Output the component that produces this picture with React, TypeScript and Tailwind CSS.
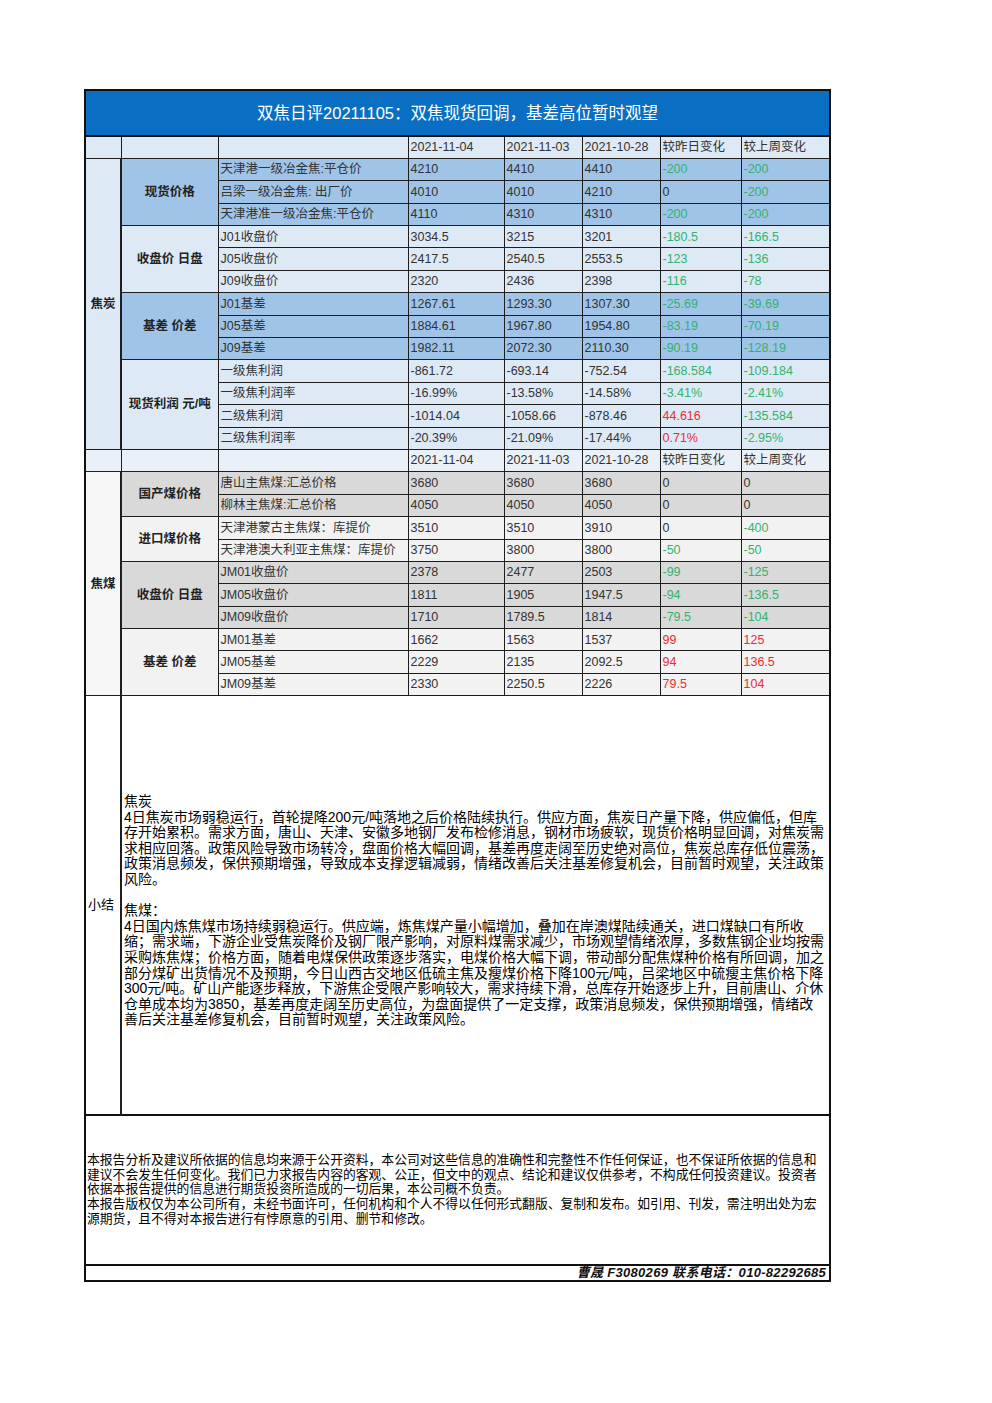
import React from "react";

// ─── Data ───────────────────────────────────────────────────────────────────────

type Tone = "g" | "r" | "n";
type Row = [string, string, string, string, [string, Tone], [string, Tone]];

interface Group {
  label: string;
  bg: string;
  rows: Row[];
}

const cokeGroups: Group[] = [
  {
    label: "现货价格",
    bg: "bg-[#9fc4e8]",
    rows: [
      ["天津港一级冶金焦:平仓价", "4210", "4410", "4410", ["-200", "g"], ["-200", "g"]],
      ["吕梁一级冶金焦: 出厂价", "4010", "4010", "4210", ["0", "n"], ["-200", "g"]],
      ["天津港准一级冶金焦:平仓价", "4110", "4310", "4310", ["-200", "g"], ["-200", "g"]],
    ],
  },
  {
    label: "收盘价 日盘",
    bg: "bg-[#dde9f5]",
    rows: [
      ["J01收盘价", "3034.5", "3215", "3201", ["-180.5", "g"], ["-166.5", "g"]],
      ["J05收盘价", "2417.5", "2540.5", "2553.5", ["-123", "g"], ["-136", "g"]],
      ["J09收盘价", "2320", "2436", "2398", ["-116", "g"], ["-78", "g"]],
    ],
  },
  {
    label: "基差 价差",
    bg: "bg-[#9fc4e8]",
    rows: [
      ["J01基差", "1267.61", "1293.30", "1307.30", ["-25.69", "g"], ["-39.69", "g"]],
      ["J05基差", "1884.61", "1967.80", "1954.80", ["-83.19", "g"], ["-70.19", "g"]],
      ["J09基差", "1982.11", "2072.30", "2110.30", ["-90.19", "g"], ["-128.19", "g"]],
    ],
  },
  {
    label: "现货利润 元/吨",
    bg: "bg-[#dde9f5]",
    rows: [
      ["一级焦利润", "-861.72", "-693.14", "-752.54", ["-168.584", "g"], ["-109.184", "g"]],
      ["一级焦利润率", "-16.99%", "-13.58%", "-14.58%", ["-3.41%", "g"], ["-2.41%", "g"]],
      ["二级焦利润", "-1014.04", "-1058.66", "-878.46", ["44.616", "r"], ["-135.584", "g"]],
      ["二级焦利润率", "-20.39%", "-21.09%", "-17.44%", ["0.71%", "r"], ["-2.95%", "g"]],
    ],
  },
];

const coalGroups: Group[] = [
  {
    label: "国产煤价格",
    bg: "bg-[#d9d9d9]",
    rows: [
      ["唐山主焦煤:汇总价格", "3680", "3680", "3680", ["0", "n"], ["0", "n"]],
      ["柳林主焦煤:汇总价格", "4050", "4050", "4050", ["0", "n"], ["0", "n"]],
    ],
  },
  {
    label: "进口煤价格",
    bg: "bg-[#f2f2f2]",
    rows: [
      ["天津港蒙古主焦煤：库提价", "3510", "3510", "3910", ["0", "n"], ["-400", "g"]],
      ["天津港澳大利亚主焦煤：库提价", "3750", "3800", "3800", ["-50", "g"], ["-50", "g"]],
    ],
  },
  {
    label: "收盘价 日盘",
    bg: "bg-[#d9d9d9]",
    rows: [
      ["JM01收盘价", "2378", "2477", "2503", ["-99", "g"], ["-125", "g"]],
      ["JM05收盘价", "1811", "1905", "1947.5", ["-94", "g"], ["-136.5", "g"]],
      ["JM09收盘价", "1710", "1789.5", "1814", ["-79.5", "g"], ["-104", "g"]],
    ],
  },
  {
    label: "基差 价差",
    bg: "bg-[#f2f2f2]",
    rows: [
      ["JM01基差", "1662", "1563", "1537", ["99", "r"], ["125", "r"]],
      ["JM05基差", "2229", "2135", "2092.5", ["94", "r"], ["136.5", "r"]],
      ["JM09基差", "2330", "2250.5", "2226", ["79.5", "r"], ["104", "r"]],
    ],
  },
];

const cokeText = [
  "4日焦炭市场弱稳运行，首轮提降200元/吨落地之后价格陆续执行。供应方面，焦炭日产量下降，供应偏低，但库",
  "存开始累积。需求方面，唐山、天津、安徽多地钢厂发布检修消息，钢材市场疲软，现货价格明显回调，对焦炭需",
  "求相应回落。政策风险导致市场转冷，盘面价格大幅回调，基差再度走阔至历史绝对高位，焦炭总库存低位震荡，",
  "政策消息频发，保供预期增强，导致成本支撑逻辑减弱，情绪改善后关注基差修复机会，目前暂时观望，关注政策",
  "风险。",
];

const coalText = [
  "4日国内炼焦煤市场持续弱稳运行。供应端，炼焦煤产量小幅增加，叠加在岸澳煤陆续通关，进口煤缺口有所收",
  "缩；需求端，下游企业受焦炭降价及钢厂限产影响，对原料煤需求减少，市场观望情绪浓厚，多数焦钢企业均按需",
  "采购炼焦煤；价格方面，随着电煤保供政策逐步落实，电煤价格大幅下调，带动部分配焦煤种价格有所回调，加之",
  "部分煤矿出货情况不及预期，今日山西古交地区低硫主焦及瘦煤价格下降100元/吨，吕梁地区中硫瘦主焦价格下降",
  "300元/吨。矿山产能逐步释放，下游焦企受限产影响较大，需求持续下滑，总库存开始逐步上升，目前唐山、介休",
  "仓单成本均为3850，基差再度走阔至历史高位，为盘面提供了一定支撑，政策消息频发，保供预期增强，情绪改",
  "善后关注基差修复机会，目前暂时观望，关注政策风险。",
];

const disclaimer = [
  "本报告分析及建议所依据的信息均来源于公开资料，本公司对这些信息的准确性和完整性不作任何保证，也不保证所依据的信息和",
  "建议不会发生任何变化。我们已力求报告内容的客观、公正，但文中的观点、结论和建议仅供参考，不构成任何投资建议。投资者",
  "依据本报告提供的信息进行期货投资所造成的一切后果，本公司概不负责。",
  "本报告版权仅为本公司所有，未经书面许可，任何机构和个人不得以任何形式翻版、复制和发布。如引用、刊发，需注明出处为宏",
  "源期货，且不得对本报告进行有悖原意的引用、删节和修改。",
];

const dates = ["2021-11-04", "2021-11-03", "2021-10-28", "较昨日变化", "较上周变化"];

// ─── Cells ──────────────────────────────────────────────────────────────────────

const cell = "border border-[#1e1e1e] h-[22.4px] px-[2px] py-0 text-[12.5px] leading-none whitespace-nowrap";

const toneClass = (t: Tone) =>
  t === "g" ? "text-[#34b26c]" : t === "r" ? "text-[#ee2b33]" : "text-[#333333]";

function HeaderRow({ bg }: { bg: string }) {
  return (
    <tr>
      <td className={`${cell} ${bg}`} />
      <td className={`${cell} ${bg}`} />
      <td className={`${cell} ${bg}`} />
      {dates.map((d) => (
        <td key={d} className={`${cell} ${bg} text-[#333333]`}>
          {d}
        </td>
      ))}
    </tr>
  );
}

function Section({ title, groups, sideBg }: { title: string; groups: Group[]; sideBg: string }) {
  const total = groups.reduce((n, g) => n + g.rows.length, 0);
  return (
    <>
      {groups.map((g, gi) =>
        g.rows.map((r, ri) => (
          <tr key={`${gi}-${ri}`}>
            {gi === 0 && ri === 0 && (
              <td rowSpan={total} className={`${cell} ${sideBg} text-center font-bold text-[#222222] border-r-2`}>
                {title}
              </td>
            )}
            {ri === 0 && (
              <td rowSpan={g.rows.length} className={`${cell} ${g.bg} text-center font-bold text-[#222222]`}>
                {g.label}
              </td>
            )}
            <td className={`${cell} ${g.bg} text-[#333333]`}>{r[0]}</td>
            <td className={`${cell} ${g.bg} text-[#333333]`}>{r[1]}</td>
            <td className={`${cell} ${g.bg} text-[#333333]`}>{r[2]}</td>
            <td className={`${cell} ${g.bg} text-[#333333]`}>{r[3]}</td>
            <td className={`${cell} ${g.bg} ${toneClass(r[4][1])}`}>{r[4][0]}</td>
            <td className={`${cell} ${g.bg} ${toneClass(r[5][1])}`}>{r[5][0]}</td>
          </tr>
        ))
      )}
    </>
  );
}

// ─── Page ───────────────────────────────────────────────────────────────────────

export default function App() {
  return (
    <div
      className="min-h-[1403px] w-[992px] bg-white pl-[84px] pt-[89px]"
      style={{ fontFamily: '"Liberation Sans", "Noto Sans CJK SC", sans-serif' }}
    >
      <table className="w-[745px] table-fixed border-collapse border-2 border-[#111]">
        <colgroup>
          <col className="w-[36px]" />
          <col className="w-[97px]" />
          <col className="w-[190px]" />
          <col className="w-[96px]" />
          <col className="w-[78px]" />
          <col className="w-[78px]" />
          <col className="w-[81px]" />
          <col className="w-[89px]" />
        </colgroup>
        <tbody>
          <tr>
            <td
              colSpan={8}
              className="h-[46px] border-2 border-[#111] bg-[#0a6fc2] text-center text-[16.5px] font-normal text-white"
            >
              双焦日评20211105：双焦现货回调，基差高位暂时观望
            </td>
          </tr>
          <HeaderRow bg="bg-[#dde9f5]" />
          <Section title="焦炭" groups={cokeGroups} sideBg="bg-[#dde9f5]" />
          <HeaderRow bg="bg-[#e9f0f8]" />
          <Section title="焦煤" groups={coalGroups} sideBg="bg-[#f7f7f7]" />
          <tr>
            <td className="h-[419px] border border-r-2 border-[#1e1e1e] pl-[2px] text-left text-[13px] text-black">小结</td>
            <td colSpan={7} className="border border-[#1e1e1e] px-[2px] align-middle text-[14px] leading-[15.6px] text-black">
              <div className="pt-[12px]">
                <div>焦炭</div>
                {cokeText.map((l) => (
                  <div key={l} className="whitespace-nowrap">
                    {l}
                  </div>
                ))}
                <div className="h-[15.6px]" />
                <div>焦煤：</div>
                {coalText.map((l) => (
                  <div key={l} className="whitespace-nowrap">
                    {l}
                  </div>
                ))}
              </div>
            </td>
          </tr>
          <tr>
            <td
              colSpan={8}
              className="h-[150px] border-2 border-[#111] px-[1px] align-middle text-[12.8px] leading-[14.7px] text-black"
            >
              {disclaimer.map((l) => (
                <div key={l} className="whitespace-nowrap">
                  {l}
                </div>
              ))}
            </td>
          </tr>
          <tr>
            <td
              colSpan={8}
              className="h-[16px] border-2 border-[#111] px-[3px] text-right text-[13px] font-bold italic leading-none tracking-[0.3px] text-[#111]"
            >
              曹晟 F3080269 联系电话：010-82292685
            </td>
          </tr>
        </tbody>
      </table>
    </div>
  );
}
